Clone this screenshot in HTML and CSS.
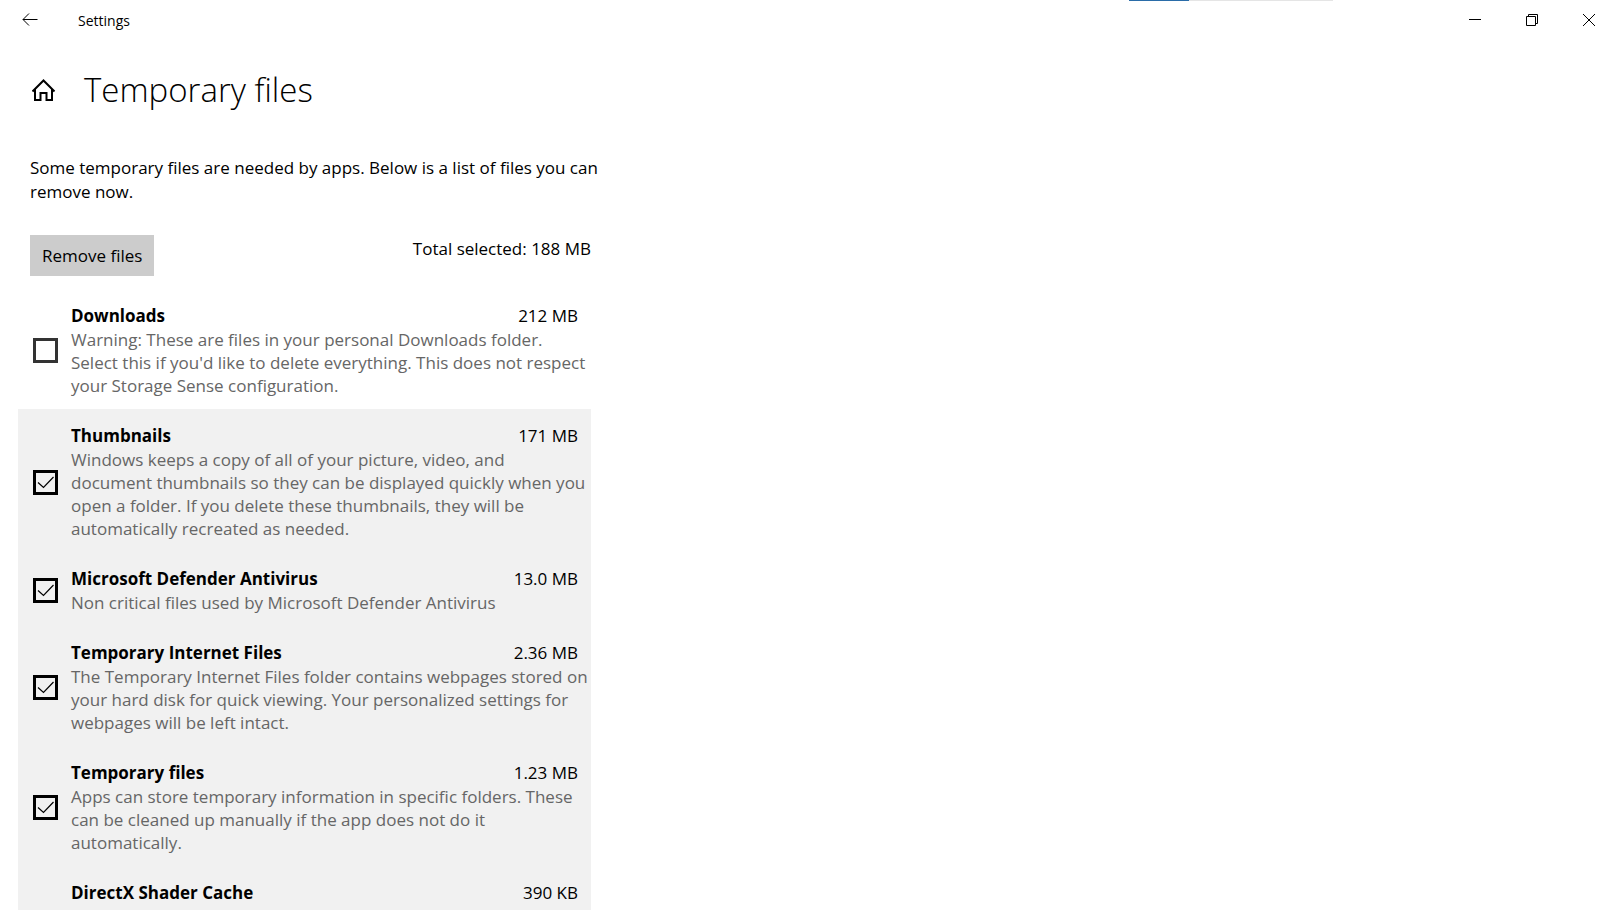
FILE: index.html
```
<!DOCTYPE html>
<html lang="en">
<head>
<meta charset="utf-8">
<title>Settings</title>
<link rel="stylesheet" href="styles.css">
</head>
<body>
<div class="window">
  <header class="titlebar">
    <button class="back" aria-label="Back"><svg width="16" height="14" viewBox="0 0 16 14"><path d="M7 .5 1 6.5 7 12.5M1 6.5H15.5"/></svg></button>
    <span class="app-name">Settings</span>
    <div class="progress"><div class="progress-value"></div></div>
    <div class="controls">
      <button aria-label="Minimize"><svg width="12" height="12" viewBox="0 0 12 12"><path d="M0 5.5H12"/></svg></button>
      <button aria-label="Restore"><svg width="12" height="12" viewBox="0 0 12 12"><path d="M.5 2.5H9.5V11.5H.5ZM2.5 2.500V.5H11.5V9.5H9.5"/></svg></button>
      <button aria-label="Close"><svg width="12" height="12" viewBox="0 0 12 12"><path d="M0 0 12 12M12 0 0 12"/></svg></button>
    </div>
  </header>
  <main class="content">
    <div class="heading">
      <button class="home" aria-label="Home"><svg width="24" height="22" viewBox="0 0 24 22"><path d="M.5 12.5 11.5 1.5 22.500 12.5M3 10.500V21H8.500V14H14.500V21H20V10.500"/></svg></button>
      <h1>Temporary files</h1>
    </div>
    <p class="intro">Some temporary files are needed by apps. Below is a list of files you can<br>remove now.</p>
    <div class="actions">
      <button class="remove">Remove files</button>
      <span class="total">Total selected: 188 MB</span>
    </div>
    <div class="list">
      <label class="item"><input type="checkbox"><span class="text"><span class="name">Downloads</span><span class="size">212 MB</span><span class="desc">Warning: These are files in your personal Downloads folder.<br>Select this if you'd like to delete everything. This does not respect<br>your Storage Sense configuration.</span></span></label>
      <label class="item"><input type="checkbox" checked><span class="text"><span class="name">Thumbnails</span><span class="size">171 MB</span><span class="desc">Windows keeps a copy of all of your picture, video, and<br>document thumbnails so they can be displayed quickly when you<br>open a folder. If you delete these thumbnails, they will be<br>automatically recreated as needed.</span></span></label>
      <label class="item"><input type="checkbox" checked><span class="text"><span class="name">Microsoft Defender Antivirus</span><span class="size">13.0 MB</span><span class="desc">Non critical files used by Microsoft Defender Antivirus</span></span></label>
      <label class="item"><input type="checkbox" checked><span class="text"><span class="name">Temporary Internet Files</span><span class="size">2.36 MB</span><span class="desc">The Temporary Internet Files folder contains webpages stored on<br>your hard disk for quick viewing. Your personalized settings for<br>webpages will be left intact.</span></span></label>
      <label class="item"><input type="checkbox" checked><span class="text"><span class="name">Temporary files</span><span class="size">1.23 MB</span><span class="desc">Apps can store temporary information in specific folders. These<br>can be cleaned up manually if the app does not do it<br>automatically.</span></span></label>
      <label class="item"><input type="checkbox" checked><span class="text"><span class="name">DirectX Shader Cache</span><span class="size">390 KB</span><span class="desc">Clean up files created by the graphics system which can speed up<br>application load time and improve responsiveness. They will be<br>re-generated as needed.</span></span></label>
    </div>
  </main>
</div>
</body>
</html>
```
FILE: styles.css
```
* { box-sizing: border-box; }
body {
  margin: 0;
  background: #fff;
  color: #000;
  font: 17px/23px "Open Sans", "Noto Sans", sans-serif;
}
button {
  border: 0;
  padding: 0;
  background: none;
  color: inherit;
  font: inherit;
}
svg { display: block; fill: none; stroke: #000; stroke-width: 1; }
.window { height: 100vh; overflow: hidden; }
.titlebar { position: relative; display: flex; align-items: center; height: 40px; }
.back { display: flex; justify-content: center; width: 59px; }
.app-name { padding: 1px 0 0 19px; font-size: 14px; line-height: 20px; }
.progress {
  position: absolute;
  top: 0;
  right: 17.6%;
  width: 204px;
  height: 1px;
  background: #e5e5e5;
}
.progress-value { width: 60px; height: 1px; background: #2a6ca8; }
.controls { display: flex; margin-left: auto; padding-right: 1px; }
.controls button { display: flex; justify-content: center; align-items: center; width: 57px; height: 40px; }
.content { max-width: 591px; padding-left: 18px; }
.heading { display: flex; align-items: center; height: 64px; margin-top: 18px; padding-left: 14px; gap: 28px; }
.home svg { stroke-width: 2; }
h1 { margin: 0; font-size: 33px; line-height: 48px; font-weight: 300; }
.intro { margin: 34px 0 0 12px; line-height: 24px; white-space: nowrap; }
.actions { display: flex; justify-content: space-between; margin: 31px 0 0 12px; }
.remove { height: 41px; padding: 0 12px; background: #ccc; }
.total { padding-top: 2px; }
.list { margin-top: 13px; }
.item { display: flex; align-items: center; gap: 13px; padding: 15px 13px 12px 15px; }
.item:has(:checked) { background: #f1f1f1; }
.item input {
  flex: none;
  appearance: none;
  width: 25px;
  height: 25px;
  margin: 0;
  border: 3px solid #333;
}
.item input:checked {
  border-color: #000;
  background: url("data:image/svg+xml,%3Csvg xmlns='http://www.w3.org/2000/svg' viewBox='0 0 19 19'%3E%3Cpath d='M2 9.500 7.500 14.500 17.500 4' fill='none' stroke='black' stroke-width='1.200'/%3E%3C/svg%3E") center / 19px 19px no-repeat;
}
.text { flex: 1; min-width: 0; display: grid; grid-template-columns: 1fr auto; }
.name, .size { line-height: 24px; }
.name { font-weight: 700; }
.desc { grid-column: 1 / -1; min-width: 0; color: #666; white-space: nowrap; }
```
